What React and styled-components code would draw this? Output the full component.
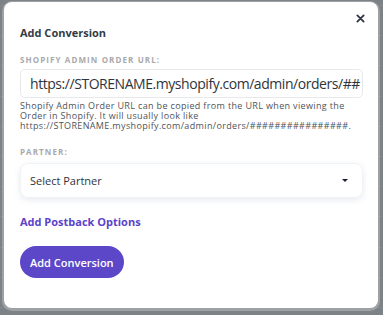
import React from 'react';
import styled, { createGlobalStyle } from 'styled-components';

const GlobalStyle = createGlobalStyle`
  html, body {
    margin: 0;
    padding: 0;
    height: 100%;
  }
  body {
    font-family: "Open Sans", "Liberation Sans", sans-serif;
    background-color: #7c8286;
    background-image: repeating-linear-gradient(
      to bottom,
      transparent 0px,
      transparent 5px,
      rgba(255, 255, 255, 0.06) 5px,
      rgba(255, 255, 255, 0.06) 6px,
      transparent 6px,
      transparent 30.2px
    );
  }
`;

const Backdrop = styled.div`
  width: 383px;
  height: 315px;
  padding: 2px 5px 0 4px;
  box-sizing: border-box;
`;

const Modal = styled.div`
  position: relative;
  width: 374px;
  height: 306px;
  box-sizing: border-box;
  background: #fff;
  border-radius: 8px;
  padding: 23px 16px 0 16px;
  box-shadow: 0 1px 0 2px rgba(255, 255, 255, 0.25);
`;

const Close = styled.button`
  position: absolute;
  top: 9px;
  right: 11px;
  width: 14px;
  height: 14px;
  padding: 0;
  border: none;
  background: none;
  display: flex;
  align-items: center;
  justify-content: center;
  cursor: pointer;
`;

const Title = styled.h2`
  margin: 0 0 13px 0;
  font-size: 11px;
  font-weight: 700;
  color: #333b46;
  line-height: 16px;
`;

const Label = styled.div`
  font-size: 8px;
  font-weight: 700;
  letter-spacing: 1.1px;
  color: #a9aaac;
  text-transform: uppercase;
  line-height: 12px;
  margin-bottom: ${p => p.$gap || 3}px;
`;

const Input = styled.div`
  width: 343px;
  height: 29px;
  box-sizing: border-box;
  border: 1px solid #e7e8ea;
  border-radius: 5px;
  padding: 0 9px;
  display: flex;
  align-items: center;
  overflow: hidden;
  white-space: nowrap;
  font-size: 14px;
  letter-spacing: -0.45px;
  color: #2f343a;
`;

const Help = styled.p`
  margin: 2.5px 0 0 0;
  font-size: 9px;
  letter-spacing: 0.35px;
  line-height: 10px;
  color: #4f5358;
  white-space: nowrap;
`;

const Field = styled.div`
  margin-top: ${p => p.$top || 0}px;
`;

const Select = styled.div`
  width: 343px;
  height: 35px;
  box-sizing: border-box;
  border-radius: 8px;
  border: 1px solid #f1f2f5;
  box-shadow: 0 2px 6px rgba(120, 140, 180, 0.18);
  padding: 0 14px 0 9px;
  display: flex;
  align-items: center;
  justify-content: space-between;
  font-size: 11px;
  color: #2f343a;
`;

const Caret = styled.span`
  width: 0;
  height: 0;
  border-left: 3.5px solid transparent;
  border-right: 3.5px solid transparent;
  border-top: 3.5px solid #1c2033;
`;

const LinkText = styled.a`
  display: block;
  margin-top: 17px;
  font-size: 11px;
  font-weight: 700;
  color: #5b43c9;
  text-decoration: none;
  line-height: 14px;
`;

const Button = styled.button`
  display: block;
  margin-top: 17px;
  height: 32px;
  padding: 0 10px;
  border: none;
  border-radius: 16px;
  background: #5d47c9;
  color: #fff;
  font-family: inherit;
  font-size: 11px;
  font-weight: 600;
  cursor: pointer;
`;

export default function App() {
  return (
    <>
      <GlobalStyle />
      <Backdrop>
        <Modal>
          <Close aria-label="Close">
            <svg width="9" height="9" viewBox="0 0 10 10">
              <path d="M1.5 1.5 L8.5 8.5 M8.5 1.5 L1.5 8.5" stroke="#2e3643" strokeWidth="2" strokeLinecap="round" />
            </svg>
          </Close>
          <Title>Add Conversion</Title>
          <Field>
            <Label>Shopify Admin Order URL:</Label>
            <Input>https://STORENAME.myshopify.com/admin/orders/##</Input>
            <Help>
              Shopify Admin Order URL can be copied from the URL when viewing the<br />
              Order in Shopify. It will usually look like<br />
              https://STORENAME.myshopify.com/admin/orders/################.
            </Help>
          </Field>
          <Field $top={15}>
            <Label $gap={5.5}>Partner:</Label>
            <Select>
              <span>Select Partner</span>
              <Caret />
            </Select>
          </Field>
          <LinkText href="#">Add Postback Options</LinkText>
          <Button>Add Conversion</Button>
        </Modal>
      </Backdrop>
    </>
  );
}
